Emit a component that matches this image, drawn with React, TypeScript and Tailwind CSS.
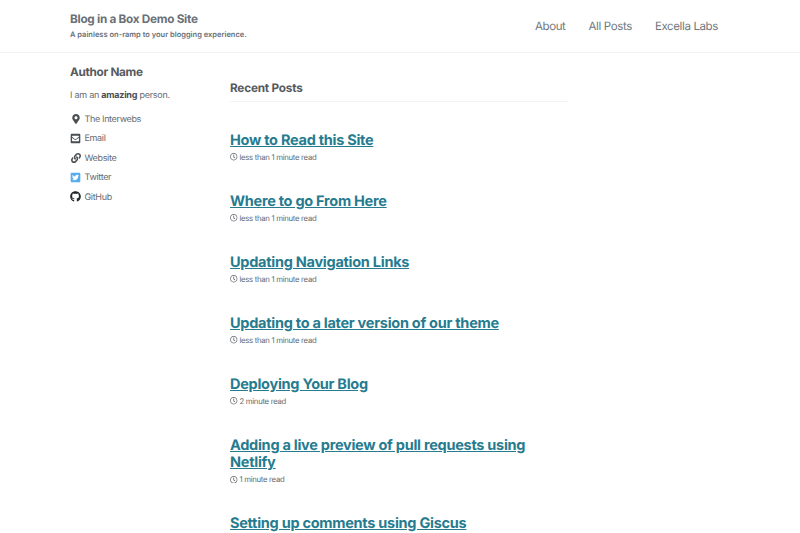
import { FaGithub, FaTwitterSquare, FaMapMarkerAlt, FaLink, FaEnvelopeSquare, FaRegClock } from "react-icons/fa";

const posts = [
  { title: "How to Read this Site", read: "less than 1 minute read" },
  { title: "Where to go From Here", read: "less than 1 minute read" },
  { title: "Updating Navigation Links", read: "less than 1 minute read" },
  { title: "Updating to a later version of our theme", read: "less than 1 minute read" },
  { title: "Deploying Your Blog", read: "2 minute read" },
  { title: "Adding a live preview of pull requests using Netlify", read: "1 minute read" },
  { title: "Setting up comments using Giscus", read: "less than 1 minute read" },
];

const links = [
  { label: "The Interwebs", icon: <FaMapMarkerAlt className="w-[10px] h-[10px] text-[#494e52]" /> },
  { label: "Email", icon: <FaEnvelopeSquare className="w-[11px] h-[11px] text-[#494e52]" /> },
  { label: "Website", icon: <FaLink className="w-[10px] h-[10px] text-[#494e52]" /> },
  { label: "Twitter", icon: <FaTwitterSquare className="w-[11px] h-[11px] text-[#55acee]" /> },
  { label: "GitHub", icon: <FaGithub className="w-[11px] h-[11px] text-[#24292e]" /> },
];

export default function App() {
  return (
    <div className="h-[533px] overflow-hidden bg-white text-[#555a5e] font-['Inter',sans-serif] [text-rendering:geometricPrecision]">
      {/* masthead */}
      <header className="h-[53px] border-b border-[#f2f3f3] pl-[70px] pr-[82px] flex items-center justify-between">
        <div>
          <div className="text-[11.75px] font-bold leading-[15px] tracking-[-0.27px] text-[#6a7177]">Blog in a Box Demo Site</div>
          <div className="text-[7.5px] font-semibold leading-[12px] mt-[2px] text-[#6a7177]">A painless on-ramp to your blogging experience.</div>
        </div>
        <nav className="flex gap-[23px] pt-[1px] text-[11.5px] tracking-[-0.37px] text-[#6f777d]">
          <span>About</span>
          <span>All Posts</span>
          <span>Excella Labs</span>
        </nav>
      </header>

      <div className="flex pl-[70px]">
        {/* author sidebar */}
        <aside className="w-[160px] shrink-0 pt-[11.5px]">
          <h3 className="text-[11.75px] font-bold leading-[15px] tracking-[-0.3px]">Author Name</h3>
          <p className="text-[9px] tracking-[-0.25px] mt-[9.5px] text-[#666b70]">I am an <strong className="text-[#494e52]">amazing</strong> person.</p>
          <ul className="mt-[11px] flex flex-col gap-[7.5px]">
            {links.map((l) => (
              <li key={l.label} className="flex items-center text-[9px] tracking-[-0.34px] h-[12px] text-[#666b70]">
                <span className="w-[11px] flex justify-center mr-[3.5px] pb-[2px]">{l.icon}</span>
                {l.label}
              </li>
            ))}
          </ul>
        </aside>

        {/* post list */}
        <main className="w-[338px] pt-[28px]">
          <h3 className="text-[11.75px] font-bold leading-[15px] tracking-[-0.2px] pb-[5px] border-b border-[#f2f3f3]">Recent Posts</h3>
          <div className="mt-[29.5px] flex flex-col gap-[29.5px]">
            {posts.map((p) => (
              <article key={p.title}>
                <h2 className="text-[14.5px] font-bold leading-[17.5px] tracking-[-0.27px] text-[#267b8f] underline">{p.title}</h2>
                <p className="mt-[1.5px] flex items-center gap-[2px] text-[7.75px] tracking-[-0.3px] leading-[12.5px] text-[#666b70]">
                  <FaRegClock className="w-[7.5px] h-[7.5px]" />
                  {p.read}
                </p>
              </article>
            ))}
          </div>
        </main>
      </div>
    </div>
  );
}
